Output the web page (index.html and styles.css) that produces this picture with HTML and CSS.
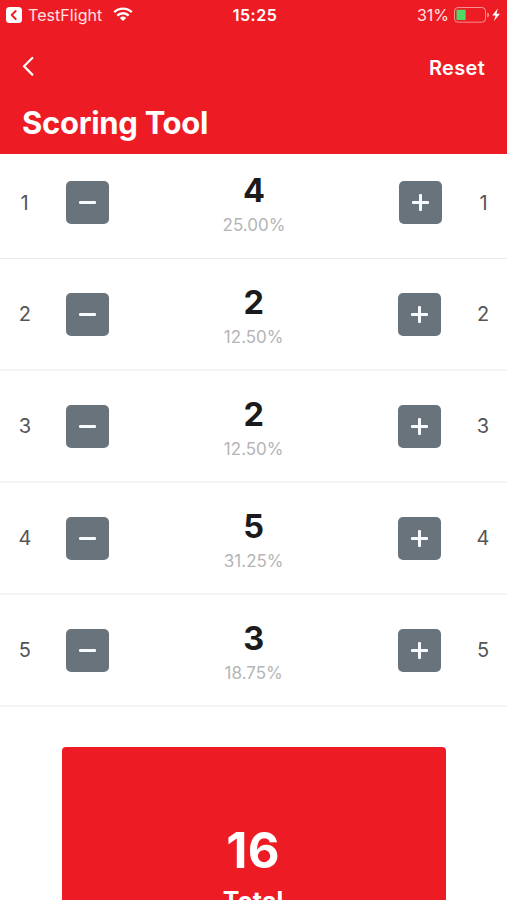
FILE: index.html
```html
<!DOCTYPE html>
<html lang="en">
<head>
<meta charset="utf-8">
<title>Scoring Tool</title>
<link rel="stylesheet" href="styles.css">
</head>
<body>
<header class="header">
  <div class="status">
    <div class="status-left">
      <svg class="app-back" viewBox="0 0 16 16"><rect width="16" height="16" rx="3.500" fill="#fff"/><path d="M9.700 4 5.700 8l4 4" fill="none" stroke="#ed1c24" stroke-width="1.900" stroke-linecap="round" stroke-linejoin="round"/></svg>
      <span class="app-name">TestFlight</span>
      <svg class="wifi" viewBox="0 0 20 14"><path d="M1.200 5.200a12.600 12.600 0 0 1 17.600 0M4.300 8.600a8.200 8.200 0 0 1 11.400 0" fill="none" stroke="#fff" stroke-width="2.400"/><path d="M6.800 10.900a4.700 4.700 0 0 1 6.400 0L10 14z" fill="#fff"/></svg>
    </div>
    <time class="clock">15:25</time>
    <div class="status-right">
      <span class="percent">31%</span>
      <svg class="battery" viewBox="0 0 48 16"><rect x=".5" y=".5" width="31" height="14.700" rx="3.500" fill="none" stroke="#fff" stroke-opacity=".5"/><rect x="2.500" y="2.800" width="9.200" height="10.200" rx=".6" fill="#4cd964"/><path d="M33.200 5.500q2 .8 2 2.500t-2 2.500z" fill="#fff" fill-opacity=".5"/><path d="M43.800 1.500 38.200 8.500h3.400l-1.600 5.500 6-7.300h-3.500z" fill="#fff"/></svg>
    </div>
  </div>
  <nav class="nav">
    <svg class="back" viewBox="0 0 12 20"><path d="M10.300 2 2 10.300l8.300 8.300" fill="none" stroke="#fff" stroke-width="2.200" stroke-linecap="round" stroke-linejoin="round"/></svg>
    <span class="reset">Reset</span>
  </nav>
  <h1 class="title">Scoring Tool</h1>
</header>
<main>
  <div class="row first"><span class="num">1</span><button class="step" aria-label="Minus"><i class="minus"></i></button><div class="score"><b class="value">4</b><span class="share">25.00%</span></div><button class="step" aria-label="Plus"><i class="minus plus"></i></button><span class="num">1</span></div>
  <div class="row"><span class="num">2</span><button class="step" aria-label="Minus"><i class="minus"></i></button><div class="score"><b class="value">2</b><span class="share">12.50%</span></div><button class="step" aria-label="Plus"><i class="minus plus"></i></button><span class="num">2</span></div>
  <div class="row"><span class="num">3</span><button class="step" aria-label="Minus"><i class="minus"></i></button><div class="score"><b class="value">2</b><span class="share">12.50%</span></div><button class="step" aria-label="Plus"><i class="minus plus"></i></button><span class="num">3</span></div>
  <div class="row"><span class="num">4</span><button class="step" aria-label="Minus"><i class="minus"></i></button><div class="score"><b class="value">5</b><span class="share">31.25%</span></div><button class="step" aria-label="Plus"><i class="minus plus"></i></button><span class="num">4</span></div>
  <div class="row"><span class="num">5</span><button class="step" aria-label="Minus"><i class="minus"></i></button><div class="score"><b class="value">3</b><span class="share">18.75%</span></div><button class="step" aria-label="Plus"><i class="minus plus"></i></button><span class="num">5</span></div>
  <section class="total"><strong class="total-value">16</strong><span class="total-label">Total</span></section>
</main>
</body>
</html>
```

FILE: styles.css
```css
* { box-sizing: border-box; }
html { overflow: hidden; height: 100%; }
body { margin: 0; height: 900px; overflow: hidden; background: #fff; color: #1b1b1d; font-family: Inter, "Liberation Sans", sans-serif; }
svg { display: block; flex: none; }
.header { height: 154px; background: #ed1c24; color: #fff; }
.status { height: 30px; display: grid; grid-template-columns: 1fr auto 1fr; align-items: center; padding: 0 5px 0 6px; font-size: 16px; }
.status-left, .status-right { display: flex; align-items: center; }
.status-right { justify-content: flex-end; }
.app-name, .percent { color: #ffe3e3; }
.app-name { letter-spacing: .05px; }
.app-back { width: 16px; height: 16px; margin-right: 6px; }
.wifi { width: 20px; height: 14px; margin-left: 11px; margin-top: -2px; }
.clock { padding-left: 2px; font-weight: 600; letter-spacing: .5px; }
.battery { width: 48px; height: 16px; margin-left: 5px; }
.nav { height: 74px; display: flex; align-items: center; justify-content: space-between; padding: 0 22px; }
.back { width: 12px; height: 20px; margin-top: -2px; }
.reset { padding-top: 1px; font-size: 20px; font-weight: 600; letter-spacing: .3px; }
.title { margin: 0; padding-left: 22px; font-size: 31px; line-height: 38px; font-weight: 700; letter-spacing: -.3px; }
.row { height: 112px; display: grid; grid-template-columns: 66px 43px 1fr 43px 66px; align-items: center; padding-left: .4px; border-bottom: 2px solid #f4f4f4; }
.first { height: 105px; padding-left: 0; padding-bottom: 7px; border-bottom: 1px solid #eaeaea; }
.first { grid-template-columns: 66px 43px 1fr 43px 65px; }
.num { color: #555; font-size: 20px; text-align: center; }
.num:first-child { padding-right: 17px; }
.num:last-child { padding-left: 18px; }
.step { width: 43px; height: 43px; padding: 0; border: 0; border-radius: 5px; background: #68737b; display: grid; place-items: center; }
.minus { width: 17px; height: 3px; margin-right: 1px; background: #f7fbff; position: relative; border-radius: 1px; }
.plus { margin-right: 0; }
.plus::after { content: ""; position: absolute; left: 7px; top: -7px; width: 3px; height: 17px; background: #f7fbff; border-radius: 1px; }
.score { display: flex; flex-direction: column; align-items: center; padding-top: 4px; }
.value { font-size: 32.5px; line-height: 38px; }
.share { margin-top: 4px; margin-bottom: 1px; font-size: 17px; line-height: 22px; color: #b5b5b5; }
.total { width: 384px; height: 153px; margin: 40px auto 0 62px; padding-top: 75px; border-radius: 4px 4px 0 0; background: #ed1c24; color: #fff; display: flex; flex-direction: column; align-items: center; overflow: hidden; }
.total-value { font-size: 49px; line-height: 58px; flex: none; margin-right: 2px; letter-spacing: .3px; }
.total-label { margin-top: 6px; margin-right: 2px; font-size: 25px; line-height: 30px; font-weight: 700; flex: none; }
```
